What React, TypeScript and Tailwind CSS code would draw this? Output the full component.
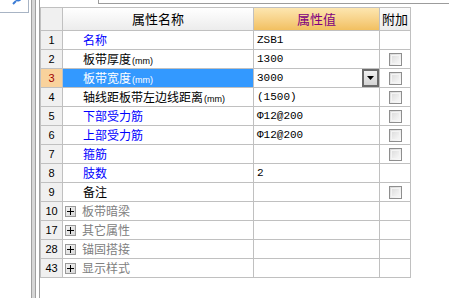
const cjk = "font-['SimSun','Noto_Sans_CJK_SC',sans-serif]"

type Row = {
  no: string
  name: string
  unit?: boolean
  color: "blue" | "black"
  value?: string
  check?: boolean
  selected?: boolean
}

const rows: Row[] = [
  { no: "1", name: "名称", color: "blue", value: "ZSB1" },
  { no: "2", name: "板带厚度", unit: true, color: "black", value: "1300", check: true },
  { no: "3", name: "板带宽度", unit: true, color: "blue", value: "3000", check: true, selected: true },
  { no: "4", name: "轴线距板带左边线距离", unit: true, color: "black", value: "(1500)", check: true },
  { no: "5", name: "下部受力筋", color: "blue", value: "Φ12@200", check: true },
  { no: "6", name: "上部受力筋", color: "blue", value: "Φ12@200", check: true },
  { no: "7", name: "箍筋", color: "blue", check: true },
  { no: "8", name: "肢数", color: "blue", value: "2" },
  { no: "9", name: "备注", color: "black", check: true },
]

const groups = [
  { no: "10", name: "板带暗梁" },
  { no: "17", name: "其它属性" },
  { no: "28", name: "锚固搭接" },
  { no: "43", name: "显示样式" },
]

function CheckBox() {
  return (
    <div className="h-[13px] w-[13px] border border-[#8e8e8e] bg-gradient-to-br from-[#d8d8d8] to-[#fdfdfd] p-px">
      <div className="h-full w-full border border-[#f4f4f4]" />
    </div>
  )
}

function PlusBox() {
  return (
    <div className="relative h-[11px] w-[11px] border border-[#9a9a9a] bg-gradient-to-br from-[#f4f4f4] to-[#d6d6d6]">
      <div className="absolute left-[1px] top-[4px] h-px w-[7px] bg-black" />
      <div className="absolute left-[4px] top-[1px] h-[7px] w-px bg-black" />
    </div>
  )
}

const cell = "border-r border-b border-[#c0c0c0] h-[19px] flex items-center"

export default function App() {
  return (
    <div className={`flex h-[298px] w-[449px] overflow-hidden bg-white ${cjk}`}>
      <div className="w-[31px] shrink-0">
        <div className="relative h-[13px] w-[29px] border-b border-r border-[#a8b4c4]">
          <svg className="absolute left-[12px] top-[-3px]" width="10" height="8" viewBox="0 0 10 8">
            <path d="M1 7 L4 4" stroke="#3a7bd5" strokeWidth="2" />
            <path d="M4 3 A3 3 0 0 0 9 1" stroke="#3a7bd5" strokeWidth="1.5" fill="none" />
          </svg>
        </div>
      </div>
      <div className="w-[5px] shrink-0 border-x border-[#a0a0a0] bg-[#d6d6d6]" />
      <div className="w-[3px] shrink-0" />
      <div className="flex-1 border-l border-[#a0a0a0]">
        <div className="h-[7px]">
          <div className="ml-[58px] h-[4px] border-b border-l border-[#9c9c9c]" />
        </div>
        <div className="grid w-[371px] grid-cols-[22px_191px_126px_31px] border-l border-t border-[#c0c0c0]">
          <div className="h-[23px] border-r border-b border-[#c0c0c0] bg-[#f0f0f0]" />
          <div className="flex h-[23px] items-center justify-center border-r border-b border-[#c0c0c0] bg-gradient-to-b from-white to-[#ececec] text-[13px] text-black">
            属性名称
          </div>
          <div className="flex h-[23px] items-center justify-center border-r border-b border-[#c0c0c0] bg-gradient-to-b from-[#fde6b0] to-[#f2c060] text-[13px] text-[#800080]">
            属性值
          </div>
          <div className="flex h-[23px] items-center justify-center border-r border-b border-[#c0c0c0] bg-gradient-to-b from-[#fbfbfb] to-[#ececec] text-[13px] text-black">
            附加
          </div>

          {rows.map((r) => (
            <div key={r.no} className="contents">
              <div
                className={`${cell} justify-center font-['Liberation_Sans',sans-serif] text-[11px] ${
                  r.selected ? "bg-[#f9d29c] text-[#a00000]" : "bg-[#f0f0f0] text-black"
                }`}
              >
                {r.no}
              </div>
              <div
                className={`${cell} whitespace-nowrap pl-[20px] text-[12px] ${
                  r.selected ? "bg-[#3399ff] text-white" : r.color === "blue" ? "text-[#0000ff]" : "text-black"
                }`}
              >
                <span>
                  {r.name}
                  {r.unit && <span className="ml-px font-['Liberation_Sans',sans-serif] text-[9px]">(mm)</span>}
                </span>
              </div>
              <div className={`${cell} justify-between pl-[3px] font-['Liberation_Mono',monospace] text-[11px] text-black`}>
                <span>{r.value}</span>
                {r.selected && (
                  <div className="flex h-[18px] w-[17px] items-center justify-center border-2 border-[#6a6a6a] bg-gradient-to-b from-[#f0f0f0] to-[#d4d4d4]">
                    <svg width="7" height="4" viewBox="0 0 7 4">
                      <path d="M0 0 H7 L3.5 4 Z" fill="#000" />
                    </svg>
                  </div>
                )}
              </div>
              <div className={`${cell} justify-center`}>{r.check && <CheckBox />}</div>
            </div>
          ))}

          {groups.map((g) => (
            <div key={g.no} className="contents">
              <div className={`${cell} justify-center bg-[#f0f0f0] font-['Liberation_Sans',sans-serif] text-[11px] text-black`}>
                {g.no}
              </div>
              <div className={`${cell} gap-[6px] pl-[2px] text-[12px] text-[#808080]`}>
                <PlusBox />
                {g.name}
              </div>
              <div className={cell} />
              <div className={cell} />
            </div>
          ))}
        </div>
      </div>
    </div>
  )
}
